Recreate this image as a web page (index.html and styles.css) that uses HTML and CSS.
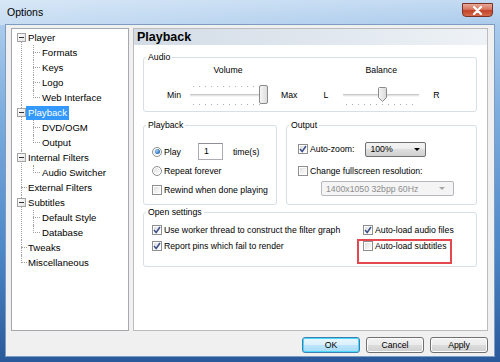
FILE: index.html
```html
<!DOCTYPE html>
<html>
<head>
<meta charset="utf-8">
<title>Options</title>
<link rel="stylesheet" href="styles.css">
</head>
<body>
<div class="window">
  <div class="titlebar">
    <span class="title">Options</span>
    <span class="close"><svg width="11" height="9" viewBox="0 0 11 9"><path d="M2 1 L9 8 M9 1 L2 8" stroke="#fff" stroke-width="2.2" stroke-linecap="round"/></svg></span>
  </div>
  <div class="client">
    <div class="main">
      <ul class="tree">
        <li><div class="row"><span class="exp"></span><span class="txt">Player</span></div>
          <ul class="kids">
            <li><div class="row"><span class="txt">Formats</span></div></li>
            <li><div class="row"><span class="txt">Keys</span></div></li>
            <li><div class="row"><span class="txt">Logo</span></div></li>
            <li><div class="row"><span class="txt">Web Interface</span></div></li>
          </ul>
        </li>
        <li class="sel"><div class="row"><span class="exp"></span><span class="txt">Playback</span></div>
          <ul class="kids">
            <li><div class="row"><span class="txt">DVD/OGM</span></div></li>
            <li><div class="row"><span class="txt">Output</span></div></li>
          </ul>
        </li>
        <li><div class="row"><span class="exp"></span><span class="txt">Internal Filters</span></div>
          <ul class="kids">
            <li><div class="row"><span class="txt">Audio Switcher</span></div></li>
          </ul>
        </li>
        <li class="leaf"><div class="row"><span class="txt">External Filters</span></div></li>
        <li><div class="row"><span class="exp"></span><span class="txt">Subtitles</span></div>
          <ul class="kids">
            <li><div class="row"><span class="txt">Default Style</span></div></li>
            <li><div class="row"><span class="txt">Database</span></div></li>
          </ul>
        </li>
        <li class="leaf"><div class="row"><span class="txt">Tweaks</span></div></li>
        <li class="leaf"><div class="row"><span class="txt">Miscellaneous</span></div></li>
      </ul>

      <div class="page">
        <div class="page-head">Playback</div>
        <div class="page-body">
          <div class="group audio">
            <span class="legend">Audio</span>
            <div class="audio-body">
              <span class="end-label min">Min</span>
              <div class="slider-wrap">
                <span class="sl-title">Volume</span>
                <div class="slider both">
                  <div class="ticks"></div>
                  <div class="track"><span class="thumb rect" style="left:69px"><svg width="9" height="19" viewBox="0 0 9 19"><defs><linearGradient id="tg" x1="0" y1="0" x2="1" y2="0"><stop offset="0" stop-color="#f7f7f7"/><stop offset="1" stop-color="#dcdcdc"/></linearGradient></defs><rect x="0.5" y="0.5" width="8" height="18" rx="1.5" fill="url(#tg)" stroke="#8a8a8a"/></svg></span></div>
                  <div class="ticks"></div>
                </div>
              </div>
              <span class="end-label max">Max</span>
              <span class="end-label l">L</span>
              <div class="slider-wrap">
                <span class="sl-title">Balance</span>
                <div class="slider below">
                  <div class="ticks blank"></div>
                  <div class="track"><span class="thumb ptr" style="left:35px"><svg width="9" height="15" viewBox="0 0 9 15"><defs><linearGradient id="tg2" x1="0" y1="0" x2="1" y2="0"><stop offset="0" stop-color="#f7f7f7"/><stop offset="1" stop-color="#dadada"/></linearGradient></defs><path d="M1.5 0.5 H7.5 Q8.5 0.5 8.5 1.5 V10.5 L4.5 14.5 L0.5 10.5 V1.5 Q0.5 0.5 1.5 0.5 Z" fill="url(#tg2)" stroke="#8a8a8a"/></svg></span></div>
                  <div class="ticks"></div>
                </div>
              </div>
              <span class="end-label r">R</span>
            </div>
          </div>

          <div class="pair">
            <div class="group playback">
              <span class="legend">Playback</span>
              <div class="pb-body">
                <div class="line">
                  <span class="radio on"></span><span class="lbl">Play</span>
                  <span class="edit">1</span>
                  <span class="lbl times">time(s)</span>
                </div>
                <div class="line">
                  <span class="radio"></span><span class="lbl">Repeat forever</span>
                </div>
                <div class="line">
                  <span class="cb"></span><span class="lbl">Rewind when done playing</span>
                </div>
              </div>
            </div>
            <div class="group output">
              <span class="legend">Output</span>
              <div class="out-body">
                <div class="line l1">
                  <span class="cb on"><svg width="8" height="8" viewBox="0 0 8 8"><path d="M1 4 L3.2 6.5 L7 1" fill="none" stroke="#3b4f8a" stroke-width="1.5"/></svg></span><span class="lbl">Auto-zoom:</span>
                  <span class="combo zoom"><span>100%</span><svg width="6" height="3" viewBox="0 0 6 3"><path d="M0 0 H6 L3 3 Z" fill="#000"/></svg></span>
                </div>
                <div class="line l2">
                  <span class="cb"></span><span class="lbl">Change fullscreen resolution:</span>
                </div>
                <div class="line l3">
                  <span class="combo res disabled"><span>1400x1050 32bpp 60Hz</span><svg width="6" height="3" viewBox="0 0 6 3"><path d="M0 0 H6 L3 3 Z" fill="#a6a6a6"/></svg></span>
                </div>
              </div>
            </div>
          </div>

          <div class="group open">
            <span class="legend">Open settings</span>
            <div class="open-body">
              <div class="line">
                <span class="cb on"><svg width="8" height="8" viewBox="0 0 8 8"><path d="M1 4 L3.2 6.5 L7 1" fill="none" stroke="#3b4f8a" stroke-width="1.5"/></svg></span><span class="lbl">Use worker thread to construct the filter graph</span>
              </div>
              <div class="line">
                <span class="cb on"><svg width="8" height="8" viewBox="0 0 8 8"><path d="M1 4 L3.2 6.5 L7 1" fill="none" stroke="#3b4f8a" stroke-width="1.5"/></svg></span><span class="lbl">Auto-load audio files</span>
              </div>
              <div class="line">
                <span class="cb on"><svg width="8" height="8" viewBox="0 0 8 8"><path d="M1 4 L3.2 6.5 L7 1" fill="none" stroke="#3b4f8a" stroke-width="1.5"/></svg></span><span class="lbl">Report pins which fail to render</span>
              </div>
              <div class="line marked">
                <span class="cb"></span><span class="lbl">Auto-load subtitles</span>
              </div>
            </div>
          </div>
        </div>
      </div>
    </div>
    <div class="buttons">
      <span class="btn default">OK</span>
      <span class="btn">Cancel</span>
      <span class="btn">Apply</span>
    </div>
  </div>
</div>
</body>
</html>
```

FILE: styles.css
```css
* { box-sizing: border-box; }
html, body { margin: 0; padding: 0; }
body {
  width: 500px;
  height: 362px;
  overflow: hidden;
  font-family: "Liberation Sans", Arial, sans-serif;
  font-size: 8.7px;
  color: #000;
}

.window {
  width: 500px;
  height: 362px;
  display: flex;
  flex-direction: column;
  background:
    linear-gradient(180deg, #c2daf2 0px, #abcbec 25px, #7eaedf 110px, #4d87c8 250px, #29599a 362px);
}

.titlebar {
  height: 25px;
  display: flex;
  justify-content: space-between;
  align-items: flex-start;
  padding: 0 7px;
  background: linear-gradient(90deg, rgba(255,255,255,.35), rgba(255,255,255,.12) 60%, rgba(255,255,255,0));
}
.title {
  font-size: 10.5px;
  margin-top: 6px;
  color: #000;
}
.close {
  width: 31px;
  height: 14px;
  margin-top: 3px;
  border: 1px solid #7a3326;
  border-radius: 0 0 4px 4px;
  background: linear-gradient(180deg, #e9a997 0%, #d8745c 45%, #c2432a 55%, #d56a4c 100%);
  display: flex;
  align-items: center;
  justify-content: center;
}

.client {
  flex: 1;
  margin: 0 6px 6px 6px;
  background: #f0f0f0;
  padding: 3px 6px 0 5px;
  display: flex;
  flex-direction: column;
  box-shadow: 0 0 0 1px #7d9cc2;
}
.main {
  display: flex;
  gap: 4px;
  height: 303px;
}

/* ---------- tree ---------- */
.tree, .tree ul { list-style: none; margin: 0; padding: 0; }
.tree {
  width: 118px;
  border: 1px solid #a5a9ae;
  background: #fff;
  padding-top: 1px;
  font-size: 9.6px;
}
.tree li { position: relative; }
.tree > li::before {
  content: "";
  position: absolute;
  left: 9px;
  top: 0;
  bottom: 0;
  border-left: 1px dotted #a0a0a0;
}
.tree > li:first-child::before { top: 7px; }
.tree > li:last-child::before { bottom: auto; height: 8px; }
.tree .row {
  display: flex;
  align-items: center;
  height: 15px;
  position: relative;
}
.tree > li.leaf > .row::before {
  content: "";
  position: absolute;
  left: 9px;
  top: 7px;
  width: 6px;
  border-top: 1px dotted #a0a0a0;
}
.exp {
  position: relative;
  z-index: 1;
  width: 9px;
  height: 9px;
  margin-left: 5px;
  border: 1px solid #a3a3a3;
  background: linear-gradient(135deg, #fff, #e3e3e3);
  display: flex;
  align-items: center;
  justify-content: center;
}
.exp::after {
  content: "";
  width: 5px;
  height: 1px;
  background: #303030;
}
.tree > li > .row > .txt { padding: 0 2px; line-height: 14px; }
.tree > li.leaf > .row > .txt { margin-left: 14px; }
.tree > li.sel > .row > .txt { background: #3399ff; color: #fff; }
.kids > li::before {
  content: "";
  position: absolute;
  left: 21px;
  top: 0;
  bottom: 0;
  border-left: 1px dotted #a0a0a0;
}
.kids > li:last-child::before { bottom: auto; height: 8px; }
.kids .row::before {
  content: "";
  position: absolute;
  left: 21px;
  top: 7px;
  width: 7px;
  border-top: 1px dotted #a0a0a0;
}
.kids .txt { margin-left: 28px; padding: 0 2px; }

/* ---------- page ---------- */
.page {
  flex: 1;
  border: 1px solid #bcbcbc;
  background: #fff;
  display: flex;
  flex-direction: column;
}
.page-head {
  height: 16px;
  line-height: 16px;
  padding-left: 3px;
  font-size: 12.5px;
  font-weight: bold;
  background: linear-gradient(90deg, #d3dce6 0%, #dfe6ee 50%, #eef2f6 100%);
}
.page-body {
  padding: 12px 10px 0 9px;
  display: flex;
  flex-direction: column;
}

.group {
  border: 1px solid #d5dfe5;
  border-radius: 3px;
}
.legend {
  display: block;
  width: max-content;
  margin: -7px 0 0 2px;
  padding: 0 2px;
  background: #fff;
  line-height: 12px;
  color: #000;
}

/* audio */
.audio-body {
  display: flex;
  align-items: flex-end;
  padding: 1px 0 5px 23px;
}
.end-label { height: 22px; line-height: 22px; }
.end-label.min { margin-right: 8px; }
.end-label.max { margin-left: 14px; margin-right: 26px; }
.end-label.l { margin-right: 14px; }
.end-label.r { margin-left: 13px; }
.slider-wrap {
  display: flex;
  flex-direction: column;
  align-items: center;
}
.sl-title { line-height: 12px; }
.slider {
  width: 78px;
  height: 22px;
  margin-top: 8px;
  display: flex;
  flex-direction: column;
  justify-content: space-between;
  padding: 2px 0 1px;
}
.ticks {
  height: 1px;
  margin: 0 4px;
  background: repeating-linear-gradient(90deg, #b0b0b0 0 1px, transparent 1px 6px);
}
.ticks.blank { background: none; }
.track {
  position: relative;
  height: 3px;
  margin: 0 1px;
  border-top: 1px solid #c9c9c9;
  border-bottom: 1px solid #f6f6f6;
  background: #e4e4e4;
}
.thumb { position: absolute; display: block; line-height: 0; }
.thumb.rect { top: -10px; }
.thumb.ptr { top: -8px; }

/* pair */
.pair {
  display: flex;
  gap: 9px;
  margin-top: 13px;
}
.playback { width: 134px; padding-bottom: 5px; }
.output { flex: 1; padding-bottom: 5px; }

.line { display: flex; align-items: center; }
.lbl { white-space: nowrap; }
.pb-body { padding: 11px 0 0 8px; }
.pb-body .line { height: 19px; }
.radio, .cb {
  flex: none;
  width: 10px;
  height: 10px;
  margin-right: 2px;
  border: 1px solid #8e8f8f;
  background: linear-gradient(135deg, #d9dadb 0%, #f3f3f3 60%, #fdfdfd 100%);
  box-shadow: inset 0 0 0 1px #fff;
  display: flex;
  align-items: center;
  justify-content: center;
}
.radio { border-radius: 50%; }
.radio.on::after {
  content: "";
  width: 5px;
  height: 5px;
  border-radius: 50%;
  background: radial-gradient(circle at 35% 35%, #a5d2f3 0%, #3c7cc3 60%, #1f5aa0 100%);
}
.edit {
  width: 25px;
  height: 17px;
  margin-left: 17px;
  border: 1px solid #abadb3;
  border-top-color: #8e9097;
  background: #fff;
  line-height: 15px;
  padding-left: 5px;
}
.times { margin-left: 10px; }

.out-body { padding: 10px 0 0 11px; }
.out-body .l1 { height: 16px; }
.out-body .l2 { height: 16px; margin-top: 6px; }
.out-body .l3 { height: 15px; margin-top: 2px; }
.combo {
  height: 15px;
  border: 1px solid #707070;
  border-radius: 2px;
  background: linear-gradient(180deg, #f3f3f3 0%, #ececec 50%, #dedede 50%, #d0d0d0 100%);
  display: flex;
  align-items: center;
  justify-content: space-between;
  padding: 0 5px 0 4px;
}
.combo.zoom { width: 61px; margin-left: 11px; }
.combo.res {
  width: 133px;
  margin-left: 23px;
  border-color: #b4b8bc;
  background: #f4f4f4;
  color: #8d8d8d;
  padding-right: 8px;
}

.open {
  margin-top: 7px;
  padding-bottom: 12px;
}
.open-body {
  display: grid;
  grid-template-columns: 211px auto;
  padding: 4px 0 0 8px;
}
.open-body .line { height: 16px; }
.marked { position: relative; }
.marked::after {
  content: "";
  position: absolute;
  left: -6px;
  top: 1px;
  width: 91px;
  height: 21px;
  border: 2px solid #e4474d;
}

/* buttons */
.buttons {
  display: flex;
  justify-content: flex-end;
  gap: 6px;
  margin-top: 6px;
}
.btn {
  width: 58px;
  height: 16px;
  border: 1px solid #707070;
  border-radius: 3px;
  background: linear-gradient(180deg, #f2f2f2 0%, #ebebeb 50%, #dddddd 50%, #cfcfcf 100%);
  box-shadow: inset 0 0 0 1px #fcfcfc;
  display: flex;
  align-items: center;
  justify-content: center;
}
.btn.default {
  border-color: #3c7fb1;
  background: linear-gradient(180deg, #eaf6fd 0%, #d9f0fc 50%, #bee6fd 50%, #a7d9f5 100%);
  box-shadow: inset 0 0 0 1px #48d8fb;
}
```
